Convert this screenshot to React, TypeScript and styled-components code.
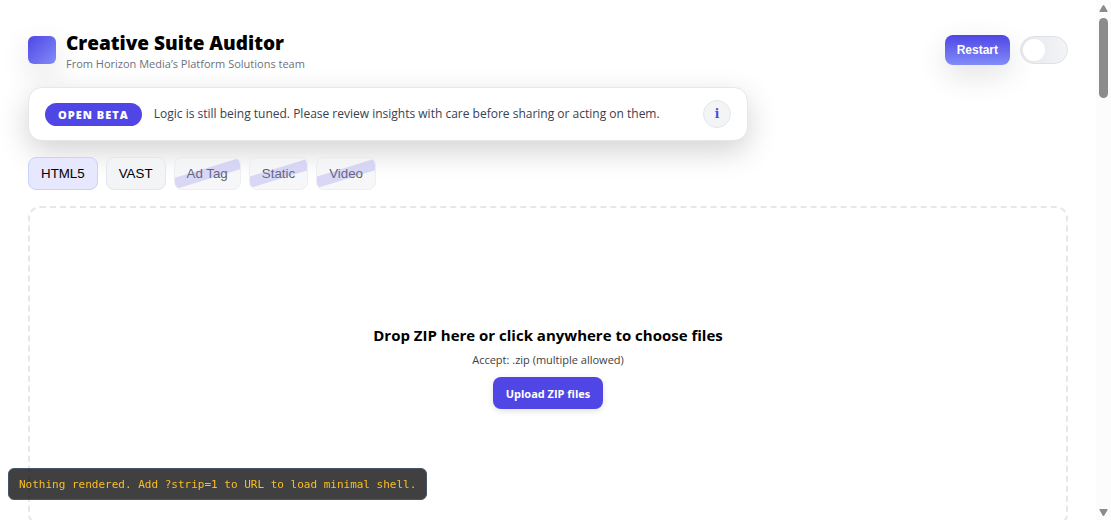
import React, { useState } from "react";
import styled, { createGlobalStyle, css } from "styled-components";

const sans = `"Open Sans", "Noto Sans", sans-serif`;
const control = `"Liberation Sans", Arial, sans-serif`;
const accent = "#4f46e5";
const line = "#e5e7eb";
const lift = "0 10px 30px rgba(0, 0, 0, 0.12)";

const GlobalStyle = createGlobalStyle`
  *, *::before, *::after { box-sizing: border-box; }
  body {
    margin: 0;
    background: #fff;
    color: #000;
    font-family: ${sans};
    overflow: hidden;
  }
  h1, h2, p { margin: 0; }
  button { cursor: pointer; }
`;

const Shell = styled.div`
  display: flex;
  height: 100vh;
  overflow: hidden;
`;

const Page = styled.main`
  flex: 1;
  min-width: 0;
  display: flex;
  flex-direction: column;
  gap: 16px;
  padding: 28px;
  overflow: hidden;
`;

const Header = styled.header`
  flex: none;
  display: flex;
  align-items: center;
  justify-content: space-between;
`;

const Brand = styled.div`
  display: flex;
  align-items: center;
  gap: 10px;
`;

const Logo = styled.span`
  width: 28px;
  height: 28px;
  border-radius: 6px;
  background: linear-gradient(135deg, ${accent}, #818cf8);
  box-shadow: ${lift};
`;

const Title = styled.h1`
  font-size: 19px;
  font-weight: 800;
  line-height: 30px;
`;

const Subtitle = styled.p`
  padding-bottom: 1px;
  font-size: 11px;
  line-height: 12px;
  color: #6b7280;
`;

const Actions = styled.div`
  display: flex;
  align-items: center;
  gap: 10px;
`;

const RestartButton = styled.button`
  height: 30px;
  padding: 0 12px;
  border: 0;
  border-radius: 8px;
  background: linear-gradient(180deg, ${accent}, #818cf8);
  box-shadow: ${lift};
  color: #fff;
  font: 700 12px ${control};
`;

const Switch = styled.input`
  appearance: none;
  display: flex;
  align-items: center;
  width: 48px;
  height: 28px;
  margin: 0;
  padding: 0 2px;
  border: 1px solid #dfe1e6;
  border-radius: 14px;
  background: linear-gradient(90deg, #e5e7eb, #f3f4f6);
  cursor: pointer;

  &::before {
    content: "";
    width: 22px;
    height: 22px;
    border-radius: 50%;
    background: #fff;
  }
  &:checked { justify-content: flex-end; }
`;

const Banner = styled.section`
  flex: none;
  display: flex;
  align-items: center;
  gap: 12px;
  max-width: 720px;
  min-height: 54px;
  padding: 0 16px;
  border: 1px solid ${line};
  border-radius: 14px;
  background: #fff;
  box-shadow: 0 10px 30px rgba(0, 0, 0, 0.18);
`;

const Badge = styled.span`
  flex: none;
  padding: 0 13px;
  border-radius: 12px;
  background: ${accent};
  color: #fff;
  font-size: 11px;
  font-weight: 800;
  letter-spacing: 1px;
  line-height: 23px;
`;

const BannerText = styled.p`
  flex: 1;
  color: #374151;
  font-size: 12px;
  line-height: 20px;
`;

const InfoButton = styled.button`
  flex: none;
  width: 28px;
  height: 28px;
  padding: 0;
  border: 1px solid ${line};
  border-radius: 50%;
  background: #f3f4f6;
  color: ${accent};
  font: 700 12px "DejaVu Serif", serif;
`;

const Tabs = styled.nav`
  flex: none;
  display: flex;
  gap: 8px;
`;

const Tab = styled.button<{ $active?: boolean }>`
  position: relative;
  height: 33px;
  padding: 0 12px;
  border: 1px solid ${line};
  border-radius: 8px;
  background: #f3f4f6;
  color: #000;
  font-family: ${control};
  overflow: hidden;

  ${(p) => p.$active && css`
    border-color: #c7d2fe;
    background: #e7e7fd;
  `}

  &:disabled {
    opacity: 0.65;
    cursor: not-allowed;
  }
  &:disabled::after {
    content: "";
    position: absolute;
    inset: 10px -4px;
    background: rgba(79, 70, 229, 0.28);
    transform: rotate(-17deg);
  }
`;

const DropZone = styled.section`
  flex: none;
  display: flex;
  flex-direction: column;
  align-items: center;
  justify-content: center;
  min-height: 320px;
  border: 2px dashed ${line};
  border-radius: 12px;
`;

const DropTitle = styled.h2`
  font-size: 15px;
  font-weight: 700;
  line-height: 22px;
`;

const DropHint = styled.p`
  margin: 5px 0 9px;
  color: #404040;
  font-size: 11px;
  line-height: 17px;
`;

const UploadButton = styled.button`
  height: 32px;
  padding: 1px 13px 0;
  border: 0;
  border-radius: 8px;
  background: ${accent};
  box-shadow: 0 2px 6px rgba(0, 0, 0, 0.12);
  color: #fff;
  font: 700 11px ${sans};
`;

const Toast = styled.div`
  position: fixed;
  left: 8px;
  bottom: 20px;
  padding: 2px 10px 0;
  border: 1px solid #475569;
  border-radius: 6px;
  background: rgba(0, 0, 0, 0.75);
  color: #fbbf24;
  font: 11px/28px "DejaVu Sans Mono", monospace;
  white-space: nowrap;
`;

const ScrollRail = styled.div`
  flex: none;
  display: flex;
  flex-direction: column;
  align-items: center;
  justify-content: space-between;
  width: 15px;
  padding: 4px 0 3px;
  background: #fcfcfc;
`;

const ScrollTop = styled.div`
  display: flex;
  flex-direction: column;
  align-items: center;
  gap: 5px;
`;

const Thumb = styled.span`
  width: 9px;
  height: 80px;
  border-radius: 5px;
  background: #8b8b8b;
`;

const Arrow = ({ down }: { down?: boolean }) => (
  <svg width="9" height="9" viewBox="0 0 9 9" fill="#8b8b8b" aria-hidden="true">
    <path d={down ? "M1 1h7q1 0 .5 1L5.3 7.5q-.8 1-1.6 0L.5 2Q0 1 1 1z" : "M1 8h7q1 0 .5-1L5.3 1.5q-.8-1-1.6 0L.5 7Q0 8 1 8z"} />
  </svg>
);

const formats = [
  { name: "HTML5", ready: true },
  { name: "VAST", ready: true },
  { name: "Ad Tag", ready: false },
  { name: "Static", ready: false },
  { name: "Video", ready: false },
];

export default function App() {
  const [format, setFormat] = useState("HTML5");
  return (
    <>
      <GlobalStyle />
      <Shell>
        <Page>
          <Header>
            <Brand>
              <Logo />
              <div>
                <Title>Creative Suite Auditor</Title>
                <Subtitle>From Horizon Media’s Platform Solutions team</Subtitle>
              </div>
            </Brand>
            <Actions>
              <RestartButton type="button">Restart</RestartButton>
              <Switch type="checkbox" role="switch" aria-label="Dark theme" />
            </Actions>
          </Header>
          <Banner>
            <Badge>OPEN BETA</Badge>
            <BannerText>
              Logic is still being tuned. Please review insights with care before sharing or acting on them.
            </BannerText>
            <InfoButton type="button" aria-label="About the beta">i</InfoButton>
          </Banner>
          <Tabs aria-label="Creative format">
            {formats.map((f) => (
              <Tab
                key={f.name}
                type="button"
                disabled={!f.ready}
                $active={f.name === format}
                onClick={() => setFormat(f.name)}
              >
                {f.name}
              </Tab>
            ))}
          </Tabs>
          <DropZone>
            <DropTitle>Drop ZIP here or click anywhere to choose files</DropTitle>
            <DropHint>Accept: .zip (multiple allowed)</DropHint>
            <UploadButton type="button">Upload ZIP files</UploadButton>
          </DropZone>
        </Page>
        <ScrollRail aria-hidden="true">
          <ScrollTop>
            <Arrow />
            <Thumb />
          </ScrollTop>
          <Arrow down />
        </ScrollRail>
      </Shell>
      <Toast role="status">Nothing rendered. Add ?strip=1 to URL to load minimal shell.</Toast>
    </>
  );
}
